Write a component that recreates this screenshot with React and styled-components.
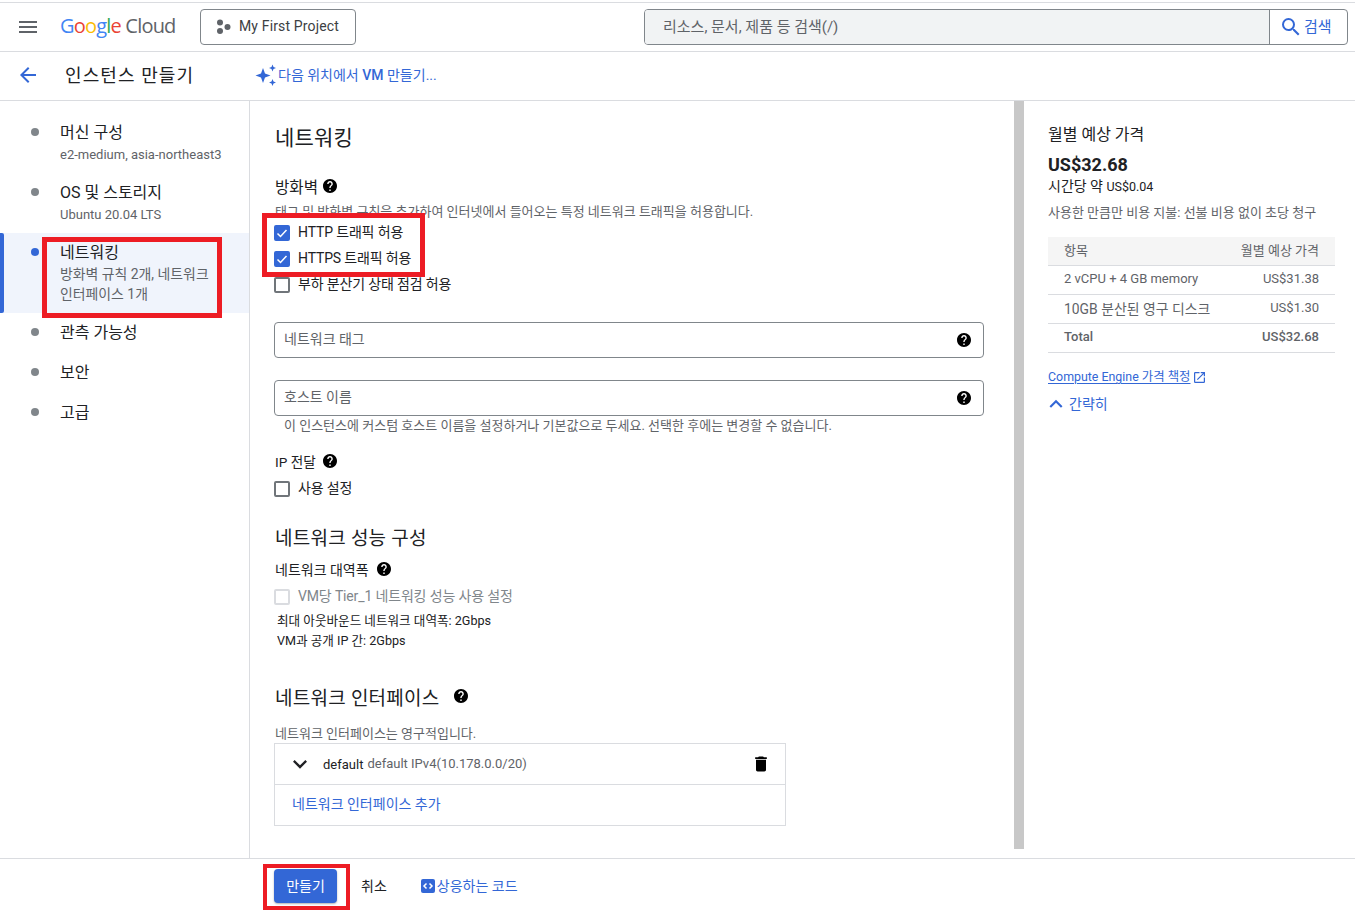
import React from "react";
import styled, { createGlobalStyle } from "styled-components";

const Global = createGlobalStyle`
  html, body { margin: 0; padding: 0; background: #fff; }
  body { font-family: Roboto, "Noto Sans CJK KR", sans-serif; color: #202124; font-size: 14px; }
  * { box-sizing: border-box; }
`;

const BLUE = "#3367d6";

const Page = styled.div`
  position: relative;
  width: 1355px;
  height: 910px;
  overflow: hidden;
  display: flex;
  flex-direction: column;
  padding-top: 2px;
`;

const TopBar = styled.header`
  height: 50px;
  flex: none;
  border-top: 1px solid #dadce0;
  border-bottom: 1px solid #dadce0;
  display: flex;
  align-items: center;
  padding-left: 19px;
`;

const Menu = styled.div`
  width: 18px;
  height: 12px;
  margin-right: 23px;
  display: flex;
  flex-direction: column;
  justify-content: space-between;
  & > i { display: block; height: 2px; background: #5f6368; }
`;

const Logo = styled.div`
  width: 117px;
  margin-right: 23px;
  padding-bottom: 2px;
  font-family: "Open Sans", Roboto, sans-serif;
  font-size: 20px;
  letter-spacing: -0.8px;
  line-height: 24px;
  white-space: nowrap;
  color: #5f6368;
`;
const L = styled.span`
  color: ${(p) => p.$c};
`;

const ProjectBtn = styled.div`
  width: 156px;
  height: 36px;
  border: 1px solid #80868b;
  border-radius: 4px;
  display: flex;
  align-items: center;
  gap: 8px;
  padding: 0 0 2px 14px;
  font-size: 14px;
  letter-spacing: 0.15px;
  color: #3c4043;
  margin-top: -1px;
`;

const SearchWrap = styled.div`
  margin-left: 288px;
  width: 704px;
  height: 36px;
  margin-top: -1px;
  display: flex;
  border: 1px solid #80868b;
  border-radius: 4px;
  overflow: hidden;
`;
const SearchInput = styled.div`
  flex: 1;
  background: #f1f3f4;
  display: flex;
  align-items: center;
  padding: 0 0 3px 18px;
  font-size: 15px;
  color: #5f6368;
`;
const SearchBtn = styled.div`
  width: 78px;
  border-left: 1px solid #80868b;
  display: flex;
  align-items: center;
  gap: 1px;
  padding-left: 9px;
  color: ${BLUE};
  font-size: 15px;
`;
const SearchLabel = styled.span`
  padding-bottom: 3px;
`;

const SubBar = styled.div`
  height: 49px;
  flex: none;
  border-bottom: 1px solid #dadce0;
  display: flex;
  align-items: center;
  padding: 0 0 2px 16px;
`;
const PageTitle = styled.h1`
  margin: 0 0 0 25px;
  width: 189px;
  padding-bottom: 2px;
  font-size: 18px;
  font-weight: 400;
  letter-spacing: 1.1px;
  color: #202124;
  white-space: nowrap;
`;
const AskLink = styled.div`
  display: flex;
  align-items: center;
  color: ${BLUE};
  font-size: 14px;
  & b { font-weight: 500; }
`;
const AskText = styled.span`
  padding-bottom: 2px;
`;

const Body = styled.div`
  flex: 1;
  display: flex;
  min-height: 0;
`;

const Side = styled.nav`
  width: 250px;
  flex: none;
  border-right: 1px solid #dadce0;
  padding-top: 12px;
`;
const NavItem = styled.div`
  position: relative;
  height: ${(p) => p.$h}px;
  padding: 10px 30px 0 60px;
  background: ${(p) => (p.$active ? "#f0f4fc" : "transparent")};
  &::before {
    content: "";
    position: absolute;
    left: 31px;
    top: 15px;
    width: 8px;
    height: 8px;
    border-radius: 50%;
    background: ${(p) => (p.$active ? BLUE : "#80868b")};
  }
  &::after {
    content: "";
    display: ${(p) => (p.$active ? "block" : "none")};
    position: absolute;
    left: 0;
    top: 0;
    bottom: 0;
    width: 4px;
    background: ${BLUE};
    border-radius: 0 2px 2px 0;
  }
`;
const NavTitle = styled.div`
  font-size: 16px;
  line-height: 20px;
  color: #202124;
  white-space: nowrap;
`;
const NavSub = styled.div`
  font-size: 13px;
  line-height: 20px;
  margin-top: 2px;
  color: #5f6368;
  white-space: nowrap;
`;
const NavSubWrap = styled.div`
  font-size: 13.9px;
  line-height: 20px;
  margin-top: 1px;
  margin-right: -3px;
  color: #5f6368;
  word-break: keep-all;
`;

const Main = styled.main`
  width: 764px;
  flex: none;
  padding: 23px 30px 0 24px;
  display: flex;
  flex-direction: column;
`;
const MainTitle = styled.h2`
  margin: 0;
  height: 28px;
  line-height: 28px;
  font-size: 21px;
  font-weight: 400;
  padding-left: 1px;
  letter-spacing: 0.2px;
  color: #202124;
`;
const Label = styled.div`
  margin-top: ${(p) => p.$mt}px;
  height: 20px;
  display: flex;
  align-items: center;
  gap: ${(p) => p.$gap}px;
  font-size: ${(p) => p.$size}px;
  padding-left: 1px;
  color: #202124;
`;
const Desc = styled.div`
  margin-top: ${(p) => p.$mt}px;
  height: ${(p) => p.$h}px;
  line-height: ${(p) => p.$h}px;
  padding-left: ${(p) => p.$pl || 1}px;
  font-size: 13px;
  color: #5f6368;
  white-space: nowrap;
`;
const DarkNote = styled.div`
  margin-top: ${(p) => p.$mt}px;
  height: 18px;
  line-height: 18px;
  padding-left: 3px;
  font-size: 12.6px;
  color: #202124;
`;
const CheckRow = styled.label`
  margin-top: ${(p) => p.$mt || 0}px;
  height: 26px;
  padding-bottom: 2px;
  display: flex;
  align-items: center;
  gap: 8px;
  font-size: 14px;
  letter-spacing: -0.15px;
  color: ${(p) => (p.$disabled ? "#80868b" : "#202124")};
`;
const CheckBox = styled.span`
  width: 16px;
  height: 16px;
  flex: none;
  margin-top: 4px;
  border-radius: 2px;
  display: flex;
  align-items: center;
  justify-content: center;
  background: ${(p) => (p.$on ? BLUE : "#fff")};
  border: 2px solid ${(p) => (p.$on ? BLUE : p.$disabled ? "#dadce0" : "#70757a")};
`;
const Field = styled.div`
  margin-top: ${(p) => p.$mt}px;
  height: 36px;
  width: 710px;
  border: 1px solid #80868b;
  border-radius: 4px;
  display: flex;
  align-items: center;
  justify-content: space-between;
  padding: 0 12px 0 9px;
  font-size: 14px;
  color: #5f6368;
`;
const FieldText = styled.span`
  padding-bottom: 4px;
`;
const SectionTitle = styled.h3`
  margin: ${(p) => p.$mt}px 0 0;
  height: 24px;
  display: flex;
  align-items: center;
  gap: ${(p) => p.$gap || 13}px;
  padding-left: 1px;
  font-size: 19px;
  font-weight: 400;
  letter-spacing: 0.25px;
  color: #202124;
`;
const SmallLabel = styled.div`
  margin-top: 12px;
  height: 18px;
  display: flex;
  align-items: center;
  gap: 8px;
  padding-left: 1px;
  font-size: 14px;
  color: #202124;
`;
const Card = styled.div`
  margin-top: 1px;
  width: 512px;
  height: 83px;
  border: 1px solid #dadce0;
`;
const CardRow = styled.div`
  height: 41px;
  display: flex;
  align-items: center;
  padding: 0 14px 0 11px;
  border-bottom: 1px solid #dadce0;
  font-size: 13px;
  color: #5f6368;
`;
const CardName = styled.span`
  color: #202124;
  margin: 0 4px 0 9px;
`;
const CardText = styled.span`
  padding-bottom: 1px;
`;
const CardAction = styled.div`
  height: 40px;
  display: flex;
  align-items: center;
  padding: 0 0 5px 17px;
  font-size: 14px;
  color: ${BLUE};
`;
const Push = styled.span`
  margin-left: auto;
  display: flex;
`;

const Track = styled.div`
  width: 10px;
  height: 748px;
  flex: none;
  background: #c8c8c8;
`;

const Aside = styled.aside`
  flex: 1;
  padding: 24px 20px 0 24px;
`;
const AsideTitle = styled.div`
  font-size: 16px;
  line-height: 20px;
  color: #202124;
`;
const Price = styled.div`
  margin-top: 10px;
  font-size: 18px;
  font-weight: 700;
  line-height: 20px;
  color: #202124;
`;
const Hourly = styled.div`
  margin-top: 1px;
  font-size: 14px;
  line-height: 20px;
  color: #202124;
  & span { font-size: 12.5px; }
`;
const AsideNote = styled.div`
  margin-top: 6px;
  font-size: 13px;
  line-height: 20px;
  color: #5f6368;
  white-space: nowrap;
`;
const Table = styled.div`
  margin-top: 14px;
  width: 287px;
`;
const Tr = styled.div`
  height: 29px;
  padding: 0 16px 3px;
  display: flex;
  align-items: center;
  justify-content: space-between;
  font-size: 13px;
  color: #5f6368;
  border-bottom: 1px solid #dadce0;
  background: ${(p) => (p.$head ? "#f5f5f5" : "transparent")};
  font-weight: ${(p) => (p.$bold ? 500 : 400)};
`;
const KoCell = styled.span`
  font-size: 13.9px;
`;
const Ext = styled.div`
  margin-top: 16px;
  display: flex;
  align-items: center;
  gap: 3px;
  font-size: 12.4px;
  line-height: 16px;
  color: ${BLUE};
  & u { text-underline-offset: 2px; }
`;
const Collapse = styled.div`
  margin: 6px 0 0 -5px;
  display: flex;
  align-items: center;
  font-size: 14px;
  line-height: 20px;
  color: ${BLUE};
`;

const Footer = styled.footer`
  height: 52px;
  flex: none;
  border-top: 1px solid #dadce0;
  display: flex;
  align-items: flex-start;
  padding: 10px 0 0 274px;
`;
const Primary = styled.div`
  width: 63px;
  height: 34px;
  padding-bottom: 3px;
  border-radius: 4px;
  background: ${BLUE};
  color: #fff;
  display: flex;
  align-items: center;
  justify-content: center;
  font-size: 14px;
  box-shadow: 0 1px 2px rgba(60, 64, 67, 0.4);
`;
const Cancel = styled.div`
  margin-left: 24px;
  height: 34px;
  padding-bottom: 3px;
  display: flex;
  align-items: center;
  font-size: 14px;
  color: #202124;
`;
const CodeLink = styled.div`
  margin-left: 34px;
  height: 34px;
  display: flex;
  align-items: center;
  gap: 2px;
  font-size: 14px;
  color: ${BLUE};
`;
const CodeText = styled.span`
  padding-bottom: 3px;
`;

const Mark = styled.div`
  position: absolute;
  border: ${(p) => p.$t}px solid #ed1c24;
  pointer-events: none;
`;

const Help = ({ size = 16 }) => (
  <svg width={size} height={size} viewBox="2 2 20 20" fill="#000" style={{ flex: "none" }}>
    <path d="M12 2C6.48 2 2 6.48 2 12s4.48 10 10 10 10-4.48 10-10S17.52 2 12 2zm1 17h-2v-2h2v2zm2.07-7.75l-.9.92C13.45 12.9 13 13.5 13 15h-2v-.5c0-1.1.45-2.1 1.17-2.83l1.24-1.26c.37-.36.59-.86.59-1.41 0-1.1-.9-2-2-2s-2 .9-2 2H8c0-2.21 1.79-4 4-4s4 1.79 4 4c0 .88-.36 1.68-.93 2.25z" />
  </svg>
);

const Tick = () => (
  <svg width="12" height="12" viewBox="0 0 24 24" fill="none" stroke="#fff" strokeWidth="3">
    <path d="M3 13l6 6L21 6" />
  </svg>
);

const Check = ({ on, disabled, mt, children }) => (
  <CheckRow $mt={mt} $disabled={disabled}>
    <CheckBox $on={on} $disabled={disabled}>{on && <Tick />}</CheckBox>
    {children}
  </CheckRow>
);

export default function App() {
  return (
    <Page>
      <Global />
      <TopBar>
        <Menu><i /><i /><i /></Menu>
        <Logo>
          <L $c="#4285f4">G</L><L $c="#ea4335">o</L><L $c="#fbbc05">o</L><L $c="#4285f4">g</L><L $c="#34a853">l</L><L $c="#ea4335">e</L> Cloud
        </Logo>
        <ProjectBtn>
          <svg width="16" height="16" viewBox="0 0 16 16" fill="#5f6368" style={{ marginTop: 2 }}>
            <circle cx="5" cy="3.5" r="3" />
            <circle cx="5" cy="12" r="3" />
            <circle cx="12.5" cy="8" r="3" />
          </svg>
          My First Project
        </ProjectBtn>
        <SearchWrap>
          <SearchInput>리소스, 문서, 제품 등 검색(/)</SearchInput>
          <SearchBtn>
            <svg width="24" height="24" viewBox="0 0 24 24" fill={BLUE}>
              <path d="M15.5 14h-.79l-.28-.27A6.47 6.47 0 0 0 16 9.5 6.5 6.5 0 1 0 9.5 16c1.61 0 3.09-.59 4.23-1.57l.27.28v.79l5 4.99L20.49 19l-4.99-5zm-6 0C7.01 14 5 11.99 5 9.5S7.01 5 9.5 5 14 7.01 14 9.5 11.99 14 9.5 14z" />
            </svg>
            <SearchLabel>검색</SearchLabel>
          </SearchBtn>
        </SearchWrap>
      </TopBar>

      <SubBar>
        <svg width="24" height="24" viewBox="0 0 24 24" fill={BLUE}>
          <path d="M20 11H7.83l5.59-5.59L12 4l-8 8 8 8 1.41-1.41L7.83 13H20v-2z" />
        </svg>
        <PageTitle>인스턴스 만들기</PageTitle>
        <AskLink>
          <svg width="24" height="24" viewBox="0 0 24 24" fill={BLUE}>
            <path d="M9 5l2 5.5L16.500 12.500 11 14.500 9 20 7 14.500 1.500 12.500 7 10.500z" />
            <path d="M18.500 1.500l1 2.500 2.500 1-2.500 1-1 2.500-1-2.500-2.500-1 2.500-1z" />
            <path d="M18.500 16l1 2.500 2.500 1-2.500 1-1 2.500-1-2.500-2.500-1 2.500-1z" />
          </svg>
          <AskText>다음 위치에서 <b>VM</b> 만들기...</AskText>
        </AskLink>
      </SubBar>

      <Body>
        <Side>
          <NavItem $h={60}>
            <NavTitle>머신 구성</NavTitle>
            <NavSub>e2-medium, asia-northeast3</NavSub>
          </NavItem>
          <NavItem $h={60}>
            <NavTitle>OS 및 스토리지</NavTitle>
            <NavSub>Ubuntu 20.04 LTS</NavSub>
          </NavItem>
          <NavItem $h={80} $active>
            <NavTitle>네트워킹</NavTitle>
            <NavSubWrap>방화벽 규칙 2개, 네트워크 인터페이스 1개</NavSubWrap>
          </NavItem>
          <NavItem $h={40}><NavTitle>관측 가능성</NavTitle></NavItem>
          <NavItem $h={40}><NavTitle>보안</NavTitle></NavItem>
          <NavItem $h={40}><NavTitle>고급</NavTitle></NavItem>
        </Side>

        <Main>
          <MainTitle>네트워킹</MainTitle>
          <Label $mt={24} $size={15.6} $gap={5}>방화벽 <Help size={14} /></Label>
          <Desc $mt={9} $h={14}>태그 및 방화벽 규칙을 추가하여 인터넷에서 들어오는 특정 네트워크 트래픽을 허용합니다.</Desc>
          <Check on>HTTP 트래픽 허용</Check>
          <Check on>HTTPS 트래픽 허용</Check>
          <Check>부하 분산기 상태 점검 허용</Check>
          <Field $mt={25}><FieldText>네트워크 태그</FieldText> <Help size={14} /></Field>
          <Field $mt={22}><FieldText>호스트 이름</FieldText> <Help size={14} /></Field>
          <Desc $mt={2} $h={16} $pl={10}>이 인스턴스에 커스텀 호스트 이름을 설정하거나 기본값으로 두세요. 선택한 후에는 변경할 수 없습니다.</Desc>
          <Label $mt={17} $size={13.6} $gap={7}>IP 전달 <Help size={14} /></Label>
          <Check mt={4}>사용 설정</Check>
          <SectionTitle $mt={23}>네트워크 성능 구성</SectionTitle>
          <SmallLabel>네트워크 대역폭 <Help size={14} /></SmallLabel>
          <Check disabled mt={5}>VM당 Tier_1 네트워킹 성능 사용 설정</Check>
          <DarkNote $mt={3}>최대 아웃바운드 네트워크 대역폭: 2Gbps</DarkNote>
          <DarkNote $mt={2}>VM과 공개 IP 간: 2Gbps</DarkNote>
          <SectionTitle $mt={34} $gap={14}>네트워크 인터페이스 <Help size={14} /></SectionTitle>
          <Desc $mt={18} $h={16}>네트워크 인터페이스는 영구적입니다.</Desc>
          <Card>
            <CardRow>
              <svg width="28" height="28" viewBox="0 0 24 24" fill="#202124" style={{ flex: "none" }}>
                <path d="M16.590 8.590L12 13.170 7.410 8.590 6 10l6 6 6-6z" />
              </svg>
              <CardName>default</CardName> <CardText>default IPv4(10.178.0.0/20)</CardText>
              <Push>
                <svg width="20" height="20" viewBox="0 0 24 24" fill="#000">
                  <path d="M6 19c0 1.100.9 2 2 2h8c1.100 0 2-.9 2-2V7H6v12zM19 4h-3.500l-1-1h-5l-1 1H5v2h14V4z" />
                </svg>
              </Push>
            </CardRow>
            <CardAction>네트워크 인터페이스 추가</CardAction>
          </Card>
        </Main>

        <Track />

        <Aside>
          <AsideTitle>월별 예상 가격</AsideTitle>
          <Price>US$32.68</Price>
          <Hourly>시간당 약 <span>US$0.04</span></Hourly>
          <AsideNote>사용한 만큼만 비용 지불: 선불 비용 없이 초당 청구</AsideNote>
          <Table>
            <Tr $head><span>항목</span><span>월별 예상 가격</span></Tr>
            <Tr><span>2 vCPU + 4 GB memory</span><span>US$31.38</span></Tr>
            <Tr><KoCell>10GB 분산된 영구 디스크</KoCell><span>US$1.30</span></Tr>
            <Tr $bold><span>Total</span><span>US$32.68</span></Tr>
          </Table>
          <Ext>
            <u>Compute Engine 가격 책정</u>
            <svg width="11" height="11" viewBox="3 3 18 18" fill={BLUE}>
              <path d="M19 19H5V5h7V3H5a2 2 0 0 0-2 2v14a2 2 0 0 0 2 2h14c1.100 0 2-.9 2-2v-7h-2v7zM14 3v2h3.590l-9.830 9.830 1.410 1.410L19 6.410V10h2V3h-7z" />
            </svg>
          </Ext>
          <Collapse>
            <svg width="26" height="26" viewBox="0 0 24 24" fill={BLUE}>
              <path d="M12 8l-6 6 1.410 1.410L12 10.830l4.590 4.580L18 14z" />
            </svg>
            간략히
          </Collapse>
        </Aside>
      </Body>

      <Footer>
        <Primary>만들기</Primary>
        <Cancel>취소</Cancel>
        <CodeLink>
          <svg width="14" height="14" viewBox="0 0 14 14">
            <rect width="14" height="14" rx="2" fill={BLUE} />
            <path d="M5.500 4.500L3 7l2.500 2.500M8.500 4.500L11 7 8.500 9.500" fill="none" stroke="#fff" strokeWidth="1.500" />
          </svg>
          <CodeText>상응하는 코드</CodeText>
        </CodeLink>
      </Footer>

      <Mark $t={5} style={{ left: 42, top: 237, width: 180, height: 81 }} />
      <Mark $t={5} style={{ left: 262, top: 213, width: 163, height: 64 }} />
      <Mark $t={4} style={{ left: 263, top: 864, width: 87, height: 46 }} />
    </Page>
  );
}
